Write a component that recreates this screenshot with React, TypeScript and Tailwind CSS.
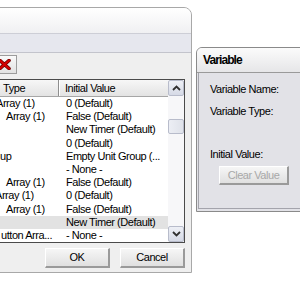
import React from 'react';

interface Row {
  type: string;
  pad: string;
  value: string;
  selected?: boolean;
}

const rows: Row[] = [
  { type: 'Array (1)', pad: 'pl-[1px]', value: '0 (Default)' },
  { type: 'Array (1)', pad: 'pl-[11px]', value: 'False (Default)' },
  { type: '', pad: 'pl-0', value: 'New Timer (Default)' },
  { type: '', pad: 'pl-0', value: '0 (Default)' },
  { type: 'up', pad: 'pl-[5px]', value: 'Empty Unit Group (...' },
  { type: '', pad: 'pl-0', value: '- None -' },
  { type: 'Array (1)', pad: 'pl-[11px]', value: 'False (Default)' },
  { type: 'Array (1)', pad: 'pl-0', value: '0 (Default)' },
  { type: 'Array (1)', pad: 'pl-[11px]', value: 'False (Default)' },
  { type: '', pad: 'pl-0', value: 'New Timer (Default)', selected: true },
  { type: 'utton Arra...', pad: 'pl-[6px]', value: '- None -' },
];

function Chevron({ down }: { down?: boolean }) {
  return (
    <svg width="9" height="6" viewBox="0 0 9 6" className={down ? 'rotate-180' : ''}>
      <path d="M1 5 L4.5 1.5 L8 5" fill="none" stroke="#303030" strokeWidth="1.8" />
    </svg>
  );
}

function ScrollButton({ down }: { down?: boolean }) {
  return (
    <div className="h-[16px] w-full flex items-center justify-center bg-gradient-to-b from-[#eef0f6] to-[#d6dae6] border border-[#b8bccb] rounded-[2px]">
      <Chevron down={down} />
    </div>
  );
}

function Button({ label, disabled, className }: { label: string; disabled?: boolean; className: string }) {
  return (
    <div
      className={`${className} flex items-center justify-center border-t border-l border-b-2 border-r-2 border-t-[#ffffff] border-l-[#ffffff] border-b-[#9a9a9a] border-r-[#9a9a9a] bg-gradient-to-b from-[#f6f6f6] to-[#e0e0e0] ${
        disabled ? 'text-[#a8a8a8]' : 'text-black'
      }`}
    >
      {label}
    </div>
  );
}

export default function App() {
  return (
    <div
      className="relative w-[300px] h-[300px] bg-white overflow-hidden text-[11px] leading-[13px] tracking-[-0.45px] text-black"
      style={{ fontFamily: '"Liberation Sans", Arial, sans-serif' }}
    >
      {/* Main dialog */}
      <div className="absolute left-[-8px] top-[7px] w-[200px] h-[266px] border border-[#a8a8a8] rounded-tr-[8px] bg-[#efefef] flex flex-col overflow-hidden">
        <div className="h-[26px] bg-gradient-to-b from-[#ffffff] to-[#f0f0f2] border-b border-[#cdced6]" />
        <div className="h-[19px] bg-[#e6e7ee] border-b border-[#c3c4cc]" />
        <div className="h-[26px] pt-[2px]">
          <div className="w-[24px] h-[19px] border border-[#9c9c9c] bg-gradient-to-b from-[#fafafa] to-[#e2e2e2] flex items-center justify-end pr-[5px]">
            <svg width="13" height="11" viewBox="0 0 13 11">
              <path d="M2 1.5 L11 9.5 M11 1.5 L2 9.5" stroke="#6a0000" strokeWidth="3.6" strokeLinecap="round" />
              <path d="M2 1.5 L11 9.5 M11 1.5 L2 9.5" stroke="#d40000" strokeWidth="2.2" strokeLinecap="round" />
            </svg>
          </div>
        </div>

        {/* List */}
        <div className="ml-[1px] mr-[6px] h-[164px] border border-[#4a4a4a] bg-white flex overflow-hidden">
          <div className="flex-1 flex flex-col min-w-0">
            <div className="h-[17px] flex bg-gradient-to-b from-[#f7f7f7] to-[#e3e3e3] border-b border-[#a6a6a6]">
              <div className="w-[64px] pl-[8px] flex items-center border-r border-[#8e8e8e]">Type</div>
              <div className="flex-1 pl-[5px] flex items-center border-l border-white">Initial Value</div>
            </div>
            {rows.map((row, i) => (
              <div key={i} className={`h-[13.2px] flex items-center ${row.selected ? 'bg-[#e2e2e2]' : ''}`}>
                <div className={`w-[64px] whitespace-nowrap overflow-hidden ${row.pad}`}>{row.type}</div>
                <div className="flex-1 pl-[7px] whitespace-nowrap overflow-hidden">{row.value}</div>
              </div>
            ))}
          </div>
          <div className="w-[16px] flex flex-col bg-[#f7f7f9]">
            <ScrollButton />
            <div className="flex-1 pt-[23px]">
              <div className="h-[15px] bg-gradient-to-r from-[#eceef4] to-[#dfe2ea] border border-[#b8bccb] rounded-[2px]" />
            </div>
            <ScrollButton down />
          </div>
        </div>

        <div className="mt-[5px] pr-[6px] flex justify-end gap-[10px]">
          <Button label="OK" className="w-[65px] h-[20px]" />
          <Button label="Cancel" className="w-[65px] h-[20px]" />
        </div>
      </div>

      {/* Variable panel */}
      <div className="absolute left-[196px] top-[47px] w-[130px] h-[165px] border border-[#8a8a8a] rounded-tl-[6px] bg-[#e2e2e7] flex flex-col overflow-hidden">
        <div className="h-[25px] pl-[6px] flex items-center bg-gradient-to-b from-[#fbfbfb] to-[#e6e6e8] border-b border-[#9a9a9a] text-[12px] font-bold tracking-[-0.9px]">
          Variable
        </div>
        <div className="flex-1 ml-[1px] mb-[2px] border-l border-b border-[#a4a4ac] flex flex-col pl-[11px] pt-[10px]">
          <div>Variable Name:</div>
          <div className="mt-[9px]">Variable Type:</div>
          <div className="mt-[30px]">Initial Value:</div>
          <Button label="Clear Value" disabled className="mt-[5px] ml-[9px] w-[70px] h-[19px]" />
        </div>
      </div>
    </div>
  );
}
